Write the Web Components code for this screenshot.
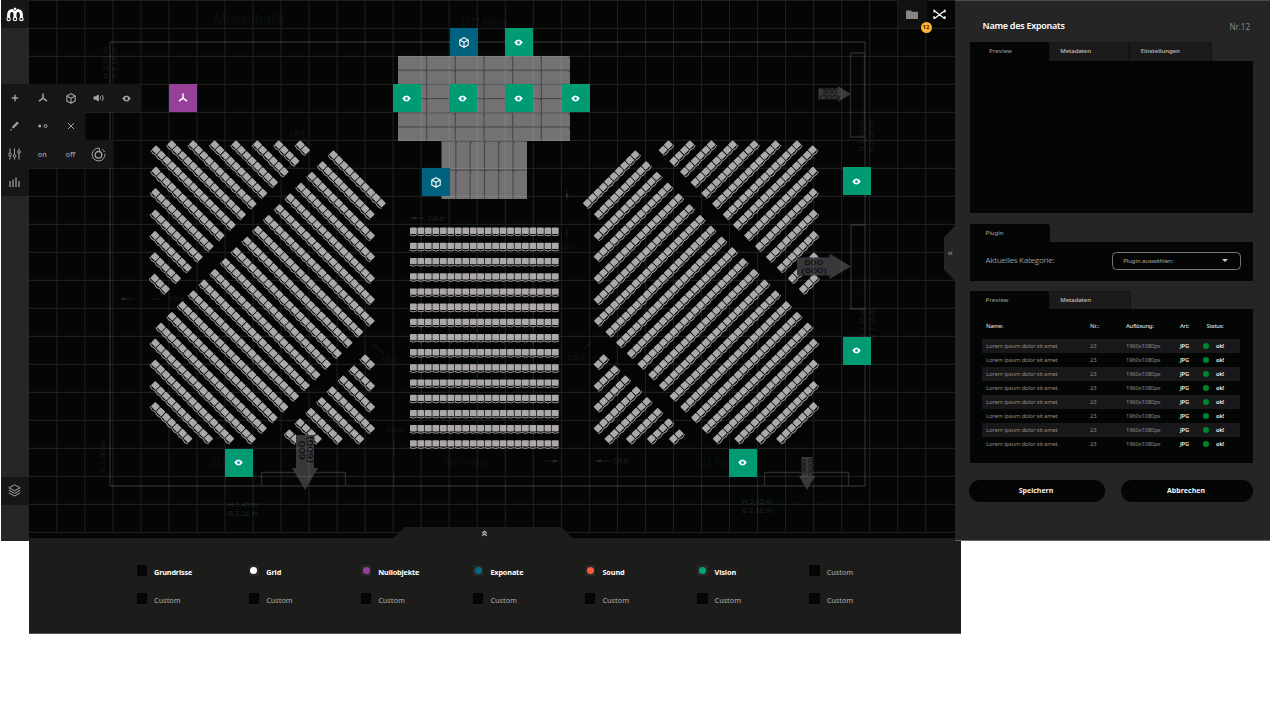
<!DOCTYPE html>
<html lang="de">
<head>
<meta charset="utf-8">
<title>Messehalle</title>
<style>
html,body{margin:0;background:#fff;height:721px;overflow:hidden}
body{font-family:"Noto Sans","Open Sans",sans-serif;color:#fff}
</style>
</head>
<body>
<hall-app></hall-app>
<script>
const ICONS={
 logo:'<svg width="18" height="15" viewBox="0 0 18 15" fill="none" stroke="#fff" stroke-width="3"><path d="M2.600 11V7.500Q2.800 4 6 3.400Q9 4 9 7V11M9 7Q9 4 12 3.400Q15.200 4 15.400 7.500V11"/><g stroke-width="1.100" fill="#222"><circle cx="2.600" cy="12" r="1.700"/><circle cx="9" cy="12" r="1.700"/><circle cx="15.400" cy="12" r="1.700"/></g><circle cx="9" cy="1.900" r="1.600" fill="#fff" stroke="#161616" stroke-width=".5"/></svg>',
 plus:'<svg width="8" height="8" viewBox="0 0 8 8" stroke="currentColor" stroke-width="1.400"><path d="M4 .8V7.200M.8 4H7.200"/></svg>',
 axis:'<svg width="10" height="10" viewBox="0 0 10 10" fill="none" stroke="currentColor" stroke-width="1.500"><path d="M5 .6V5.200L1 8.200M5 5.200L9 8.200"/></svg>',
 cube:'<svg width="10" height="11" viewBox="0 0 10 11" fill="none" stroke="currentColor" stroke-width="1.100" stroke-linejoin="round"><path d="M5 .8L9.200 3V8L5 10.200L.8 8V3ZM.8 3L5 5.200L9.200 3M5 5.200V10.200"/></svg>',
 sound:'<svg width="12" height="8" viewBox="0 0 12 8" fill="none" stroke="currentColor" stroke-width="1"><path d="M1 2.800H2.800L5.300 1V7L2.800 5.200H1Z" fill="currentColor"/><path d="M7.200 2.400Q8.200 4 7.200 5.600M9.200 1Q11.400 4 9.200 7"/></svg>',
 eye:'<svg width="9" height="7" viewBox="0 0 9 7"><path d="M.2 3.500Q4.500-2.600 8.800 3.500Q4.500 9.600 .2 3.500Z" fill="currentColor"/><circle cx="4.500" cy="3.500" r="1.500" fill="var(--pupil,#161616)"/></svg>',
 pen:'<svg width="9" height="10" viewBox="0 0 9 10" stroke="currentColor"><path d="M2.600 6.800L8 1.400" stroke-width="2.200"/><path d="M.4 9.400L1.600 8.200" stroke-width="1.200"/></svg>',
 dots:'<svg width="10" height="6" viewBox="0 0 10 6"><circle cx="1.700" cy="3" r="1.500" fill="currentColor"/><circle cx="7.500" cy="3" r="1.500" fill="none" stroke="currentColor"/></svg>',
 cross:'<svg width="8" height="8" viewBox="0 0 8 8" stroke="currentColor" stroke-width="1"><path d="M1 1L7 7M7 1L1 7"/></svg>',
 sliders:'<svg width="13" height="12" viewBox="0 0 13 12" fill="none" stroke="currentColor" stroke-width="1"><path d="M2 .5V5M2 8V11.500M6.500 .5V6.500M6.500 9.500V11.500M11 .5V2.500M11 5.500V11.500"/><circle cx="2" cy="6.500" r="1.400"/><circle cx="6.500" cy="8" r="1.400"/><circle cx="11" cy="4" r="1.400"/></svg>',
 dial:'<svg width="15" height="15" viewBox="0 0 15 15" fill="none" stroke="currentColor" stroke-width="1"><path d="M8.500 1.200A6.400 6.400 0 1 0 13.900 6.800M11.300 2.300A6.400 6.400 0 0 1 13.500 5"/><circle cx="7.500" cy="7.800" r="3.300" stroke-width="1.300"/><path d="M8.500 1.200V4"/></svg>',
 bars:'<svg width="11" height="10" viewBox="0 0 11 10" stroke="currentColor" stroke-width="1.200"><path d="M1 4V10M4 2.500V10M7 .5V10M10 4V10"/></svg>',
 layers:'<svg width="13" height="13" viewBox="0 0 13 13" fill="none" stroke="currentColor" stroke-width="1" stroke-linejoin="round"><path d="M6.500 .8L12.200 3.800L6.500 6.800L.8 3.800ZM.8 6.300L6.500 9.300L12.200 6.300M.8 8.800L6.500 12L12.200 8.800" /></svg>',
 folder:'<svg width="12" height="9" viewBox="0 0 12 9"><path d="M0 .4H5L6 1.800H12V9H0Z" fill="#868686"/></svg>',
 cut:'<svg width="13" height="11" viewBox="0 0 13 11" fill="none" stroke="#fff" stroke-width="1.200"><path d="M1 .5V3.500M1 1.500L11.500 9.500M12 7V10M12 .5V3.500M12 1.500L1.500 9.500M1 7V10"/></svg>'
};
function el(name,markup,extra){
 customElements.define(name,class extends HTMLElement{
  connectedCallback(){
   if(this.shadowRoot)return;
   const r=this.attachShadow({mode:'open'});
   const t=document.createElement('template');
   t.innerHTML=typeof markup==='function'?markup(this):markup;
   r.append(t.content.cloneNode(true));
   if(extra)extra(this,r);
  }
 });
}
const at=(h,n,d='')=>h.getAttribute(n)??d;

el('hall-icon',h=>`<style>:host{display:inline-flex;align-items:center;justify-content:center}svg{display:block}</style>${ICONS[at(h,'name')]}`);

el('tool-cell',h=>`<style>:host{display:flex;box-sizing:border-box;width:28px;height:28px;padding-right:${at(h,'icon')?'.8px':'1.500px;padding-top:2px'};align-items:center;justify-content:center;background:#161616;color:#a3a3a3;font-size:7.200px;font-weight:500;line-height:1}</style>${at(h,'icon')?`<hall-icon name="${at(h,'icon')}"></hall-icon>`:`<fit-text w="${at(h,'w')}"><slot></slot></fit-text>`}`);

el('tool-rail',`<style>
:host{display:flex;flex-direction:column;width:28px;height:540.500px;background:#262626;position:relative;z-index:3}
.row{display:flex;width:max-content}.gap1{flex:0 0 56px}.gap2{flex:1}.end{flex:0 0 36px}
</style>
<tool-cell icon="logo"></tool-cell><div class="gap1"></div>
<div class="row"><tool-cell icon="plus"></tool-cell><tool-cell icon="axis"></tool-cell><tool-cell icon="cube"></tool-cell><tool-cell icon="sound"></tool-cell><tool-cell icon="eye"></tool-cell></div>
<div class="row"><tool-cell icon="pen"></tool-cell><tool-cell icon="dots"></tool-cell><tool-cell icon="cross"></tool-cell></div>
<div class="row"><tool-cell icon="sliders"></tool-cell><tool-cell>on</tool-cell><tool-cell>off</tool-cell><tool-cell icon="dial"></tool-cell></div>
<div class="row"><tool-cell icon="bars"></tool-cell></div>
<div class="gap2"></div><tool-cell icon="layers"></tool-cell><div class="end"></div>`);

el('map-pin',h=>`<style>:host{position:absolute;left:${at(h,'x')-29}px;top:${at(h,'y')}px;width:28px;height:28px;box-sizing:border-box;padding-right:1px;display:flex;align-items:center;justify-content:center;color:#fff;background:${{axis:'#96409a',cube:'#00627f',eye:'#009b72'}[at(h,'kind')]};--pupil:#0aa5c0}</style><hall-icon name="${at(h,'kind')}"></hall-icon>`);

function seats(){
 const U=5.35,MID=968.7,rows=[];
 for(let k=0;k<7;k++){
  const n=14-2*k;
  rows.push([156-.25*k,150+21.4*k,156-.25*k+n*U,150+21.4*k+n*U]);
 }
 for(let k=0;k<7;k++){const n=13-2*k;rows.push([171.7+21.4*k,145,171.7+21.4*k+n*U,145+n*U]);}
 const ends=[[381.2,203.3],[370,214.3],[370.3,235.7],[370.3,256.7],[370.3,278.3],[370.3,299.6],[370,321]];
 for(let k=7;k<17;k++)ends.push([358.5-10.7*(k-7),332+10.7*(k-7)]);
 ends.forEach((e,k)=>rows.push([333.3-10.77*k,155+10.77*k,...e]));
 [[343.3,251.3],[364.3,229.6],[385.7,208.5],[406.7,187.8]].forEach(([y,x])=>rows.push([155.2,y,x,438.8]));
 rows.push([365,359,370.3,364.5],[354,370,370.3,386],[343.3,380,370.3,407],[332.3,391,370.3,428.5],[321.7,401.7,359.5,439],[311,412.5,338,439],[300,423,317,439],[289.3,434,295,439]);
 let s='';
 const put=(x,y,a)=>{s+=`<use href="#seat" transform="translate(${x.toFixed(1)} ${y.toFixed(1)}) rotate(${a})"/>`};
 for(const [x0,y0,x1,y1] of rows){
  const n=Math.round((x1-x0)/U);
  for(let i=0;i<=n;i++){
   const x=x0+(x1-x0)*i/n,y=y0+(y1-y0)*i/n;
   put(x,y,45);put(MID-x,y,-45);
  }
 }
 for(let r=0;r<15;r++)for(let c=0;c<20;c++)put(413.4+c*7.47,231.1+r*15.19,0);
 return s;
}
function lines(){
 let d='';
 for(let i=0;i<32;i++)d+=`M${(56.8+28.03*i).toFixed(2)} 0V533`;
 for(let i=0;i<19;i++)d+=`M29 ${(28.4+28*i).toFixed(2)}H955`;
 return d+'M29 .5H955';
}
function stage(){
 let d='',c='';
 for(let i=1;i<6;i++)d+=`M${398+28.67*i} 56V141M398 ${56+14.2*i}H570M${441.5+14.3*i} 141V199`;
 d+='M441.500 141H527M441.500 170H527';
 for(let i=1;i<=6;i++)for(let j=0;j<6;j++)c+=`M${395.8+28.67*i} ${56.5+14.2*j}h2.200v2.200z`;
 for(let i=1;i<6;i++)for(let j=0;j<2;j++)c+=`M${441.5+14.3*i} ${141.5+29*j}h2.500l-2.500 2.500z`;
 return `<path d="M398 56H570V141H527V199H441.500V141H398Z" fill="#737173"/><path d="${d}" stroke="#454446" stroke-width="1"/><path d="${c}" fill="#4a494b"/>`;
}
const tx=(x,y,w,s,t,f='#1b1b1c',a='')=>`<text x="${x}" y="${y}" font-size="${s}" textLength="${w}" lengthAdjust="spacingAndGlyphs" fill="${f}" ${a}>${t}</text>`;
const rt=(x,y,w,s,t,f)=>tx(x,y,w,s,t,f,`transform="rotate(-90 ${x} ${y})"`);

el('floor-plan',()=>`<style>:host{display:block}svg{display:block;font-family:"Liberation Sans",Arial,sans-serif}</style>
<svg width="926" height="538" viewBox="29 0 926 538" fill="none">
<defs><g id="seat"><rect x="-3.400" y="-3.500" width="6.800" height="6.300" rx=".8" fill="#aba6a8"/><path d="M-3.300 3.300V3.900Q0 5.500 3.300 3.900V3.300" fill="none" stroke="#9c9799" stroke-width="1"/></g></defs>
${tx(214,25,71,17,'Messehalle','#0d0f10')}
${tx(461,26,47,10,'1322 Plätze','#0d0f10','font-weight="bold"')}
${tx(211,466,45,10.5,'511 Plätze','#0e1010')}${tx(444,466,46,10.5,'300 Plätze','#0e1010')}${tx(696,466,45,10.5,'511 Plätze','#0e1010')}
${rt(108,79,32,8,'H 2,45 m')}${rt(117,79,32,8,'B 2,16 m')}${rt(105,472,31,8,'B 2,00 m')}
${rt(864,152,31,8,'H 2,45 m')}${rt(874,152,31,8,'B 2,16 m')}${rt(865,339,31,8,'H 2,45 m')}${rt(875,339,31,8,'B 2,16 m')}
${tx(228,507,30,8,'H 2,45 m','#232324')}${tx(228,516,30,8,'B 2,16 m','#232324')}
${tx(742,504,30,8,'H 2,45 m','#232324')}${tx(742,513,30,8,'B 2,16 m','#232324')}
${tx(290,134.5,15,6.5,'1,20 m')}${tx(428,220.5,16,6.5,'2,44 m','#242425')}${tx(170,301,14,6.5,'1,41 m')}${tx(382,362,15,6.5,'1,20 m')}${tx(387,431.5,16,6.5,'1,95 m')}${tx(568,360,16,6.5,'1,20 m')}${tx(613,463,15,6.5,'2,45 m','#242425')}${tx(560,249,15,6.5,'1,20 m')}
<path d="M410 218H424M122 299H134M596 461H610M545 461H558M394 440V456M567 190V200M567 228V238M374 344L384 354M583 350L592 341M303 138L312 146M152 299H160M394 473V485" stroke="#1b1b1d"/>
<path d="M418 218l-5-1.500v3zM127 299l-5-1.500v3zM596 461l5-1.500v3zM558 461l-5-1.500v3zM567 198l-1.500-4h3z" fill="#2b2b2d"/>
<path d="M306 490Q304 512 280 518M307 490Q310 512 335 518M851 240Q873 245 875 265Q873 285 851 300M806 490Q805 503 793 505M808 490Q810 503 822 505" stroke="#0a0c0c"/>
<path d="M110 42H865V486H110ZM850.500 53H864.500V137H850.500ZM851 225H865V309H851ZM261.500 472.500H345.500V486H261.500ZM764.500 472.500H848.500V486H764.500Z" stroke="#2a2a2c" stroke-width="1.300"/>
${stage()}${seats()}
<path d="M818.500 88.500H838V86L851 94L838 102V99.500H818.500ZM797 257.500H829.500V253.500L851 266.500L829.500 279V275.500H797ZM296 435H314V468H318L305 490L292 468H296ZM801.500 457H812.500V476H815L807 490L799 476H801.500Z" fill="#38383a"/>
<g>${tx(822,94,15,6.5,'300','#050505')}${tx(819.5,100,20.5,6.5,'(300)','#050505')}${tx(804,265,19,8,'600','#050505')}${tx(801,273,26,8,'(600)','#050505')}${rt(305,460,19,8.5,'600','#050505')}${rt(313,463,27,8.5,'(600)','#050505')}${rt(806,474,15,6,'300','#050505')}${rt(811.5,477,19,6,'(300)','#050505')}</g>
<path d="${lines()}" stroke="#fff" stroke-opacity=".1" stroke-width="1.100"/>
</svg>`);

el('plan-canvas',`<style>
:host{display:block;position:relative;background:#040606;width:926px;height:538px;overflow:hidden}
.top{position:absolute;right:0;top:0;width:57px;height:28px;display:flex}
.top hall-icon{width:28.500px;height:28px}.top hall-icon:first-child{background:#111}.top hall-icon:last-of-type{width:26px}
.badge{position:absolute;left:22.500px;top:22px;width:11px;height:11px;border-radius:50%;background:#fdb62e;color:#3a2a08;font:bold 6px/11px "Noto Sans",sans-serif;text-align:center}
.handle{position:absolute;left:364px;top:526.500px;width:180px;height:12px;background:#1c1c1a;clip-path:polygon(12px 0,168px 0,100% 100%,0 100%);color:#bbb}
.grip{position:absolute;right:0;top:226px;width:11.500px;height:55px;background:#252525;clip-path:polygon(100% 0,0 12px,0 43px,100% 100%);color:#aaa}
svg{display:block}
</style>
<floor-plan></floor-plan>
<map-pin kind="axis" x="169" y="84"></map-pin><map-pin kind="cube" x="450" y="28"></map-pin><map-pin kind="eye" x="505" y="28"></map-pin>
<map-pin kind="eye" x="393" y="84"></map-pin><map-pin kind="eye" x="449" y="84"></map-pin><map-pin kind="eye" x="505" y="84"></map-pin><map-pin kind="eye" x="562.300" y="84"></map-pin>
<map-pin kind="cube" x="422" y="168.300"></map-pin><map-pin kind="eye" x="842.500" y="167"></map-pin><map-pin kind="eye" x="842.500" y="336.500"></map-pin>
<map-pin kind="eye" x="224.600" y="448.800"></map-pin><map-pin kind="eye" x="729" y="448.800"></map-pin>
<div class="top"><hall-icon name="folder"></hall-icon><hall-icon name="cut"></hall-icon><span class="badge">12</span></div>
<div class="handle"><svg width="180" height="12" fill="none" stroke="currentColor" stroke-width="1.200"><path d="M89.200 6.300L91.500 4.300L93.800 6.300M89.200 8.800L91.500 6.800L93.800 8.800"/></svg></div>
<div class="grip"><svg width="12" height="55" fill="none" stroke="currentColor" stroke-width=".9"><path d="M6 25.500L4.400 27.200L6 28.900M8.200 25.500L6.600 27.200L8.200 28.900"/></svg></div>`);

el('layer-toggle',h=>`<style>
:host{display:flex;height:28px;align-items:flex-start;color:${at(h,'dot')||at(h,'strong')?'#fff':'#9a9a9a'};font-weight:${at(h,'dot')||at(h,'strong')?700:500};font-size:7.300px;line-height:10px}
.box{width:10.500px;height:10.500px;margin-right:7px;background:${at(h,'dot')?'#272727':'#040606'};display:flex;align-items:center;justify-content:center}
.box i{width:7px;height:7px;border-radius:50%;background:${at(h,'dot','transparent')}}
fit-text{margin-top:2.400px}
</style><span class="box"><i></i></span><fit-text w="${at(h,'w')}">${at(h,'name')}</fit-text>`);

el('layer-bar',()=>{
 const a=[['Grundrisse',38,''],['Grid',15,'#fff'],['Nullobjekte',41,'#96409a'],['Exponate',33,'#006a88'],['Sound',22,'#ff5a3c'],['Vision',21.5,'#00a579']];
 let s='';
 a.forEach(([n,w,d])=>s+=`<layer-toggle name="${n}" w="${w}" strong="1" ${d?`dot="${d}"`:''}></layer-toggle>`);
 for(let i=0;i<8;i++)s+='<layer-toggle name="Custom" w="26.500"></layer-toggle>';
 return `<style>:host{display:grid;box-sizing:border-box;width:932px;height:95.500px;padding:27px 0 0 107.600px;grid-template-columns:repeat(7,112.100px);grid-auto-rows:28px;background:#1c1c1a;border-bottom:1px solid #555}</style>${s}`;
});

el('tab-box',h=>{
 const tabs=at(h,'tabs').split(';').map(s=>s.split(','));
 return `<style>
:host{display:block;width:283px}
.tabs{display:flex;height:${at(h,'th','18')}px}
.tab{box-sizing:border-box;background:#1c1b1a;border:1px solid #141414;border-bottom:0;border-radius:0 3px 0 0;color:#b4b4b4;font-size:6px;line-height:${at(h,'th','18')-2}px;font-weight:600}
.tab.on{background:#040606;border-color:#040606;color:#969696;font-weight:500}
.body{box-sizing:border-box;background:#040606;height:${at(h,'bh')}px;overflow:hidden}
</style><div class="tabs">${tabs.map(([n,w,p,t],i)=>`<div class="tab ${i?'':'on'}" style="width:${w}px;padding-left:${p-1}px"><fit-text w="${t}">${n}</fit-text></div>`).join('')}</div><div class="body"><slot></slot></div>`;
});

el('plugin-picker',`<style>
:host{display:flex;align-items:center;height:37.500px;padding:0 12.300px 0 15.500px;justify-content:space-between;color:#999;font-size:8px;font-family:"Open Sans",sans-serif}
.sel{box-sizing:border-box;display:flex;align-items:center;justify-content:space-between;width:129px;height:18.500px;border:1px solid #777;border-radius:4.500px;padding:0 12px 0 10.500px;font-size:6px;color:#aaa;font-family:"Noto Sans",sans-serif}
.sel i{border:3.200px solid transparent;border-top:3.500px solid #ccc;border-bottom:0}
.lab{margin-top:-3px}
</style><span class="lab"><fit-text w="69">Aktuelles Kategorie:</fit-text></span><div class="sel"><fit-text w="50">Plugin auswählen:</fit-text><i></i></div>`);

el('media-table',()=>{
 const row='<div class="r"><span><fit-text w="71.500">Lorem ipsum dolor sit amet</fit-text></span><span><fit-text w="6.500">23</fit-text></span><span><fit-text w="34.500">1960x1080px</fit-text></span><span class="w"><fit-text w="9">JPG</fit-text></span><span class="w"><i></i><fit-text w="8">ok!</fit-text></span></div>';
 return `<style>
:host{display:block;padding:10px 13px 0 12px;font-size:5.800px;color:#8c8c8c;line-height:14px}
.r{display:grid;grid-template-columns:104px 36px 54px 23px 1fr;height:14px;padding-left:4px}
.r>span{display:flex;align-items:center}
.r:nth-of-type(even){background:#18181b}
.h{color:#ddd;margin-bottom:6px;font-weight:500}
.h span:last-child{padding-left:3.500px}
.w{color:#eee;font-weight:600}
i{width:6px;height:6px;border-radius:50%;background:#008229;margin:0 7px 0 0}
</style><div class="r h"><span><fit-text w="17">Name:</fit-text></span><span><fit-text w="9.500">Nr.:</fit-text></span><span><fit-text w="27.500">Auflösung:</fit-text></span><span><fit-text w="9">Art:</fit-text></span><span><fit-text w="17">Status:</fit-text></span></div>${row.repeat(8)}`;
});

el('pill-button',h=>`<style>:host{display:flex;box-sizing:border-box;padding:0 2px .5px 0;align-items:center;justify-content:center;height:22.500px;border-radius:12px;background:#040606;font-size:7px;font-weight:700;color:#f2f2f2}</style><slot></slot>`);

el('detail-panel',`<style>
:host{display:flex;flex-direction:column;box-sizing:border-box;width:314.500px;height:540.500px;background:#252525;padding:0 16px 0 15px;position:relative;z-index:2;border-bottom:1px solid #666;border-top:1px solid #4c4c4c}
header{display:flex;justify-content:space-between;align-items:center;height:41px;padding:8px 3.500px 0 12.600px;box-sizing:border-box;font-size:9px;font-weight:600;line-height:12px}
.nr{font-size:8.200px;font-weight:400;color:#8b8b8b;margin-top:2.500px;font-family:"Open Sans",sans-serif}
.two{margin-top:11px}.three{margin-top:10.500px}
footer{display:grid;grid-template-columns:136px 132px;gap:16px;margin:16.500px 0 0 -1px}
</style>
<header><fit-text w="82">Name des Exponats</fit-text><span class="nr"><fit-text w="20.500">Nr.12</fit-text></span></header>
<tab-box th="18.500" bh="152.500" tabs="Preview,79.300,19,23;Metadaten,80,11,30.500;Einstellungen,82.500,11.500,39"></tab-box>
<tab-box class="two" bh="38.500" tabs="Plugin,80,15.500,18"><plugin-picker></plugin-picker></tab-box>
<tab-box class="three" bh="154" tabs="Preview,79.300,15.500,23;Metadaten,81.700,11,30.500"><media-table></media-table></tab-box>
<footer><pill-button><fit-text w="34.500">Speichern</fit-text></pill-button><pill-button><fit-text w="38">Abbrechen</fit-text></pill-button></footer>`);

el('hall-app',`<style>
:host{display:grid;width:1269px;margin-left:1px;grid-template-columns:28px 926px 314.500px;grid-template-rows:538px 96px}
layer-bar{grid-column:2;grid-row:2}
tool-rail,plan-canvas,detail-panel{grid-row:1}
</style><tool-rail></tool-rail><plan-canvas></plan-canvas><detail-panel></detail-panel><layer-bar></layer-bar>`);

/* Inline label that tracks its letters to a given width, when one is set. */
el('fit-text','<style>:host{display:inline-block;white-space:nowrap}</style><slot></slot>',h=>{
 const w=h.getBoundingClientRect().width,n=h.textContent.length,t=+at(h,'w');
 if(w&&t&&n)h.style.letterSpacing=((t-w)/n).toFixed(3)+'px';
});
</script>
</body>
</html>
